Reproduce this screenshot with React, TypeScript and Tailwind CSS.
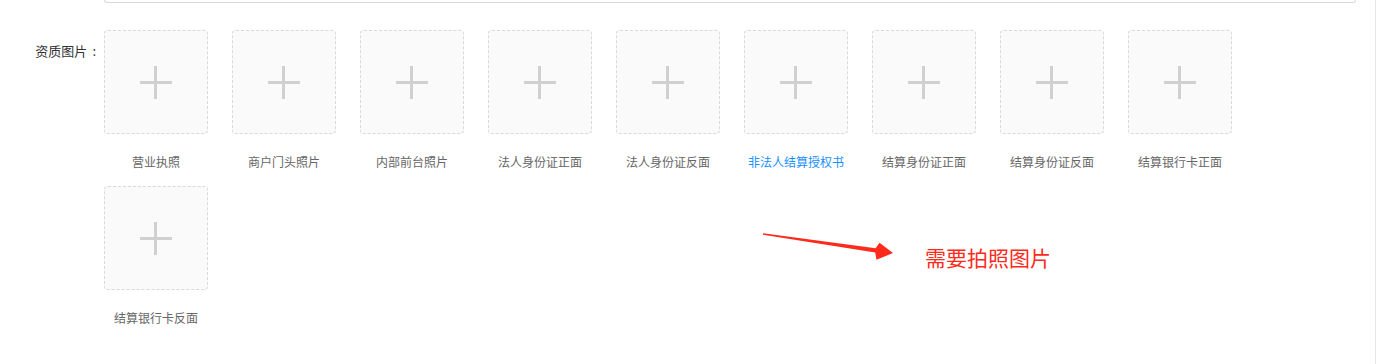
import React from 'react'

interface UploadItem {
    key: string
    label: string
    highlight?: boolean
}

const items: UploadItem[] = [
    { key: 'license', label: '营业执照' },
    { key: 'door', label: '商户门头照片' },
    { key: 'front-desk', label: '内部前台照片' },
    { key: 'legal-front', label: '法人身份证正面' },
    { key: 'legal-back', label: '法人身份证反面' },
    { key: 'auth', label: '非法人结算授权书', highlight: true },
    { key: 'settle-id-front', label: '结算身份证正面' },
    { key: 'settle-id-back', label: '结算身份证反面' },
    { key: 'bank-front', label: '结算银行卡正面' },
    { key: 'bank-back', label: '结算银行卡反面' },
]

function PlusIcon() {
    return (
        <div className="relative w-[32px] h-[33px]">
            <span className="absolute left-0 right-0 top-[15px] h-[3px] bg-[#d0d0d0]" />
            <span className="absolute top-0 bottom-0 left-[14px] w-[3px] bg-[#d0d0d0]" />
        </div>
    )
}

function UploadCard({ item }: { item: UploadItem }) {
    return (
        <div className="w-[104px] mr-[24px] mb-[16px] flex flex-col items-center">
            <div className="w-[104px] h-[104px] rounded-[4px] border border-dashed border-[#d9d9d9] bg-[#fafafa] flex items-center justify-center cursor-pointer">
                <PlusIcon />
            </div>
            <p
                className={`mt-[20px] text-[12px] leading-[16px] whitespace-nowrap ${
                    item.highlight ? 'text-[#1890ff]' : 'text-[#666666]'
                }`}
            >
                {item.label}
            </p>
        </div>
    )
}

export default function App() {
    return (
        <div
            className="relative w-[1377px] h-[364px] bg-white overflow-hidden"
            style={{ fontFamily: '"Microsoft YaHei", "Noto Sans CJK SC", "Noto Sans", sans-serif' }}
        >
            <div className="w-[1376px] h-full border-r border-[#e6e6e6]">
                {/* bottom edge of the previous field */}
                <div className="ml-[104px] w-[1252px] h-[3px] border-x border-b border-[#d9d9d9] rounded-b-[4px]" />

                {/* 资质图片 */}
                <div className="flex mt-[27px]">
                    <label className="w-[104px] shrink-0 flex justify-end pt-[12px] text-[13px] leading-[17px] text-[#333333]">
                        资质图片
                        <span className="ml-[5px] mr-[8px]">:</span>
                    </label>
                    <div className="w-[1252px] flex flex-wrap">
                        {items.map((item) => (
                            <UploadCard key={item.key} item={item} />
                        ))}
                    </div>
                </div>
            </div>

            {/* annotation */}
            <svg
                className="absolute left-0 top-0 pointer-events-none"
                width="1377"
                height="364"
                viewBox="0 0 1377 364"
            >
                <polygon
                    points="763,233.3 875.6,248.2 879.5,242.8 893,253 876.5,259.8 875.2,252.4 763,234.8"
                    fill="#ff2a1c"
                />
            </svg>
            <span className="absolute left-[925px] top-[244px] text-[21px] leading-[27px] text-[#ff2a1c] whitespace-nowrap">
                需要拍照图片
            </span>
        </div>
    )
}
